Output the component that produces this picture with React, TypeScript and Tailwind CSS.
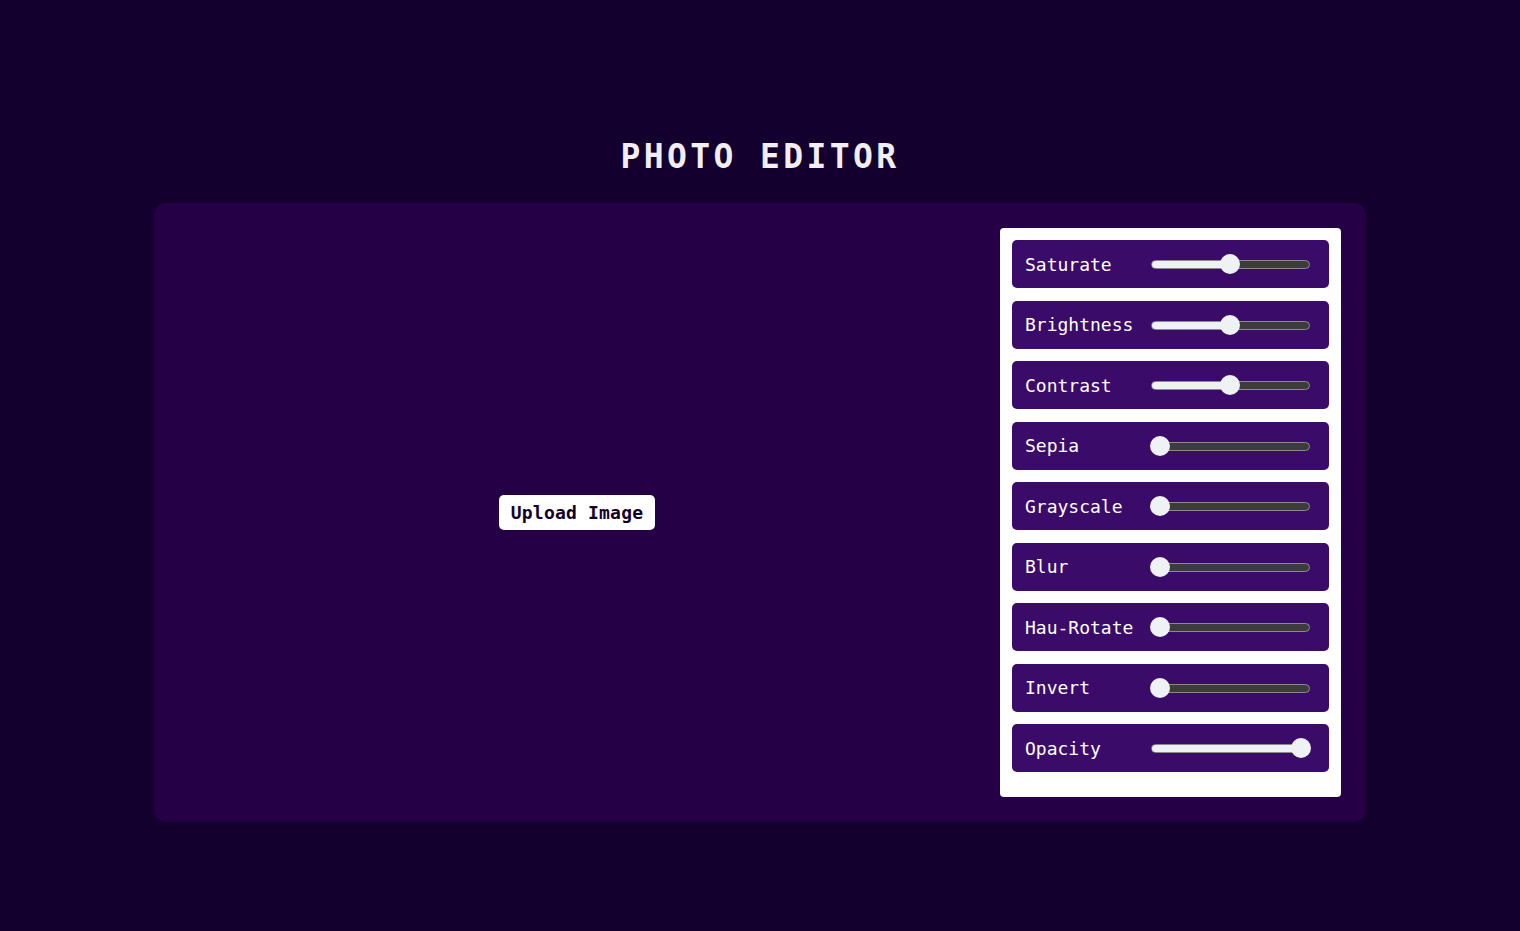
import React from "react";

const filters: { name: string; pct: number }[] = [
  { name: "Saturate", pct: 50 },
  { name: "Brightness", pct: 50 },
  { name: "Contrast", pct: 50 },
  { name: "Sepia", pct: 0 },
  { name: "Grayscale", pct: 0 },
  { name: "Blur", pct: 0 },
  { name: "Hau-Rotate", pct: 0 },
  { name: "Invert", pct: 0 },
  { name: "Opacity", pct: 100 },
];

function Slider({ pct }: { pct: number }) {
  const center = 9 + (141 * pct) / 100;
  return (
    <div className="relative w-[160px] h-[20px]">
      <div className="absolute left-0 right-0 top-[6px] h-[9px] rounded-full border border-[#8a8a8a] bg-[#3c3c3c] overflow-hidden">
        <div className="h-full bg-[#eef2f5]" style={{ width: center }} />
      </div>
      <div
        className="absolute top-0 w-[20px] h-[20px] rounded-full bg-[#eef2f5]"
        style={{ left: center - 10 }}
      />
    </div>
  );
}

export default function App() {
  return (
    <div
      className="min-h-[931px] w-full bg-[#13002e] flex flex-col items-center"
      style={{ fontFamily: '"DejaVu Sans Mono", "Liberation Mono", monospace' }}
    >
      <h1 className="mt-[137px] h-[40px] leading-[40px] text-[33px] font-bold tracking-[3.4px] text-[#f1eef5]">
        PHOTO EDITOR
      </h1>
      <div className="mt-[26px] w-[1212px] h-[619px] rounded-[12px] bg-[#250046] flex items-center pr-[25px]">
        <div className="flex-1 flex items-center justify-center">
          <button className="h-[35px] px-[12px] rounded-[5px] bg-white text-[#12002a] text-[18px] font-bold tracking-[0.2px]">
            Upload Image
          </button>
        </div>
        <div className="w-[341px] h-[569px] bg-white rounded-[4px] px-[12px] pt-[12px] flex flex-col gap-[12.5px]">
          {filters.map((f) => (
            <div
              key={f.name}
              className="h-[48px] rounded-[5px] bg-[#3b0b69] flex items-center pl-[13px] pr-[19px]"
            >
              <span className="w-[126px] text-[18px] text-white font-normal">{f.name}</span>
              <Slider pct={f.pct} />
            </div>
          ))}
        </div>
      </div>
    </div>
  );
}
